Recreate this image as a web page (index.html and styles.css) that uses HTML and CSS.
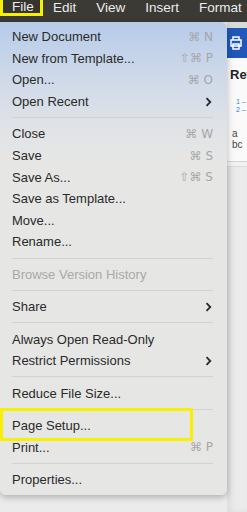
FILE: index.html
```html
<!DOCTYPE html>
<html lang="en">
<head>
  <meta charset="UTF-8" />
  <title>File menu</title>
  <link rel="stylesheet" href="styles.css">
</head>
<body>
  <div class="menubar">
    <span class="bar-item active">File</span>
    <span class="bar-item">Edit</span>
    <span class="bar-item">View</span>
    <span class="bar-item">Insert</span>
    <span class="bar-item">Format</span>
  </div>

  <div class="workspace">
    <div class="menu">
      <div class="row"><span>New Document</span><span class="key">⌘ N</span></div>
      <div class="row"><span>New from Template...</span><span class="key">⇧⌘ P</span></div>
      <div class="row"><span>Open...</span><span class="key">⌘ O</span></div>
      <div class="row"><span>Open Recent</span><span class="chev"><svg width="7" height="10" viewBox="0 0 7 10"><path d="M1.5 1.2 L5.3 5 L1.5 8.8" fill="none" stroke="#2b2b2b" stroke-width="1.8"/></svg></span></div>
      <div class="sep"></div>
      <div class="row"><span>Close</span><span class="key">⌘ W</span></div>
      <div class="row"><span>Save</span><span class="key">⌘ S</span></div>
      <div class="row"><span>Save As...</span><span class="key">⇧⌘ S</span></div>
      <div class="row"><span>Save as Template...</span></div>
      <div class="row"><span>Move...</span></div>
      <div class="row"><span>Rename...</span></div>
      <div class="sep"></div>
      <div class="row disabled"><span>Browse Version History</span></div>
      <div class="sep"></div>
      <div class="row"><span>Share</span><span class="chev"><svg width="7" height="10" viewBox="0 0 7 10"><path d="M1.5 1.2 L5.3 5 L1.5 8.8" fill="none" stroke="#2b2b2b" stroke-width="1.8"/></svg></span></div>
      <div class="sep"></div>
      <div class="row"><span>Always Open Read-Only</span></div>
      <div class="row"><span>Restrict Permissions</span><span class="chev"><svg width="7" height="10" viewBox="0 0 7 10"><path d="M1.5 1.2 L5.3 5 L1.5 8.8" fill="none" stroke="#2b2b2b" stroke-width="1.8"/></svg></span></div>
      <div class="sep"></div>
      <div class="row"><span>Reduce File Size...</span></div>
      <div class="sep"></div>
      <div class="row marked"><span>Page Setup...</span><div class="highlight"></div></div>
      <div class="row"><span>Print...</span><span class="key">⌘ P</span></div>
      <div class="sep"></div>
      <div class="row"><span>Properties...</span></div>
    </div>

    <div class="window">
      <div class="gap"></div>
      <div class="toolbar">
        <svg width="20" height="14" viewBox="0 0 20 14"><path d="M4 4 V1 H10 V4 M2 4 H12 V10 H2 Z M4 8 H10 V13 H4 Z" fill="none" stroke="#fff" stroke-width="1.5"/></svg>
      </div>
      <div class="doc">
        <div class="doc-title">Ref</div>
        <div class="doc-list"><span>1 –</span><span>2 –</span></div>
        <div class="doc-small">a<br>bc</div>
      </div>
      <div class="doc-foot"></div>
    </div>
  </div>
</body>
</html>
```

FILE: styles.css
```css
* {
  box-sizing: border-box;
  margin: 0;
  padding: 0;
}

body {
  width: 247px;
  height: 512px;
  overflow: hidden;
  background: #ebebeb;
  font-family: "Liberation Sans", "DejaVu Sans", sans-serif;
  font-size: 13px;
  color: #2a2a2a;
}

.menubar {
  height: 22px;
  background: #3c3a34;
  display: flex;
  align-items: flex-start;
  white-space: nowrap;
  overflow: hidden;
}

.bar-item {
  flex-shrink: 0;
  color: #ececec;
  font-size: 13.5px;
  line-height: 16px;
  margin-right: 20px;
}

.bar-item.active {
  border: 3px solid #f7f000;
  border-top-width: 0;
  width: 43px;
  height: 16px;
  padding-left: 9px;
  line-height: 14px;
  margin-right: 10px;
  background: #36342e;
}

.workspace {
  display: flex;
  height: 490px;
}

.menu {
  position: relative;
  z-index: 2;
  width: 227px;
  height: 473px;
  flex-shrink: 0;
  padding-top: 4px;
  background: linear-gradient(to bottom, #b6cbe9 0, #ccd8e9 50px, #dfe2e7 100px, #e6e6e5 140px, #e6e6e4 100%);
  border-radius: 0 6px 6px 6px;
  box-shadow: 0 2px 7px rgba(0, 0, 0, 0.28);
}

.row {
  position: relative;
  height: 21.6px;
  padding: 0 14px 0 12px;
  display: flex;
  align-items: center;
  justify-content: space-between;
  white-space: nowrap;
}

.row.disabled {
  color: #a9a9a9;
}

.key {
  color: #a6a6a6;
  font-family: "DejaVu Sans", sans-serif;
  font-size: 12px;
}

.chev {
  display: flex;
  padding-right: 1px;
}

.sep {
  height: 10.8px;
  margin: 0 14px 0 12px;
  display: flex;
  align-items: center;
}

.sep::after {
  content: "";
  flex: 1;
  height: 1px;
  background: #d2d2d2;
}

.highlight {
  position: absolute;
  left: 0;
  top: -7px;
  width: 193px;
  height: 33px;
  border: 3px solid #f7f000;
}

.window {
  flex: 1;
  min-width: 0;
  overflow: hidden;
  display: flex;
  flex-direction: column;
  box-shadow: inset 4px 0 6px rgba(0, 0, 0, 0.06);
}

.gap {
  height: 6px;
  background: #d9d9d9;
}

.toolbar {
  height: 30px;
  background: #1f58b8;
  padding: 8px 0 0 2px;
}

.doc {
  height: 104px;
  background: #fafafa;
  padding: 9px 0 0 3px;
  border-bottom: 1px solid #d4d4d4;
  white-space: nowrap;
}

.doc-title {
  font-size: 13px;
  font-weight: bold;
  color: #222;
}

.doc-list {
  margin-top: 16px;
  display: flex;
  flex-direction: column;
  font-size: 7px;
  line-height: 8px;
  color: #2f7fd8;
  padding-left: 6px;
}

.doc-small {
  margin-top: 14px;
  font-size: 10px;
  line-height: 11px;
  color: #444;
  padding-left: 2px;
}

.doc-foot {
  height: 5px;
  background: #f2f2f2;
  border-bottom: 1px solid #dadada;
}
```
